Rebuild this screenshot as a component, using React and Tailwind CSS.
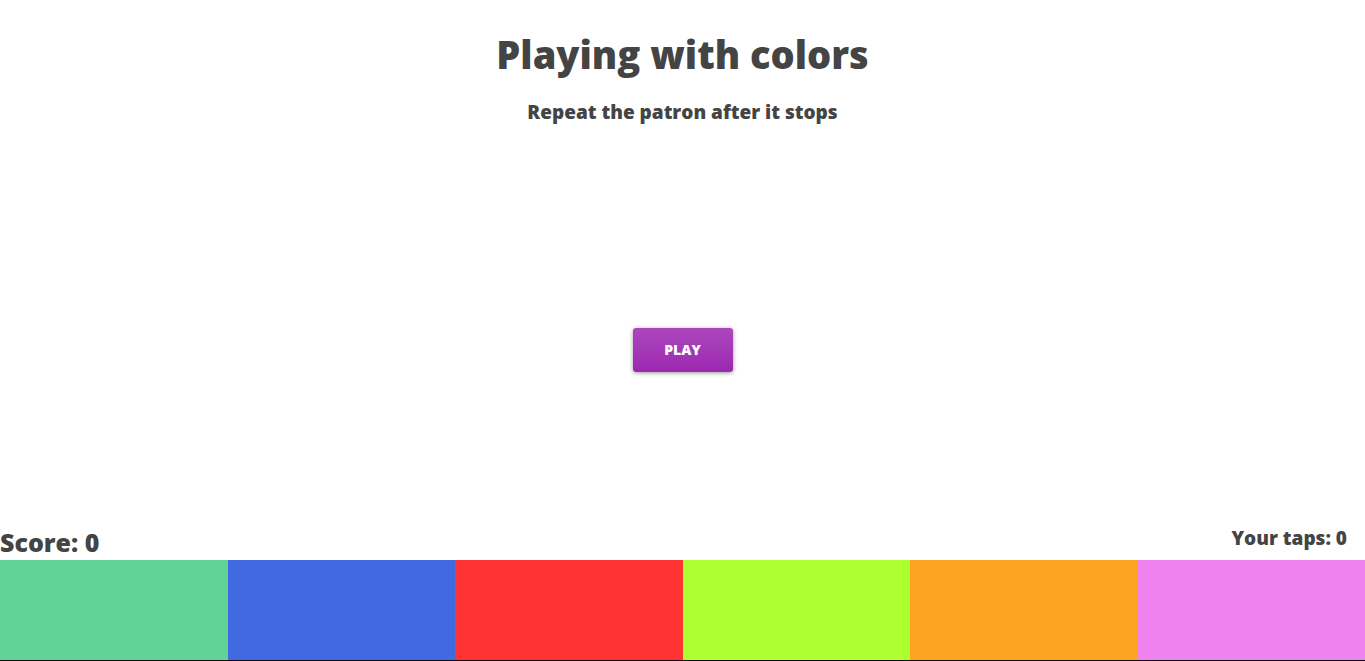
import { useState } from "react";

const tiles = [
  { name: "Green", color: "bg-[#61d394]" },
  { name: "Blue", color: "bg-[#4169e1]" },
  { name: "Red", color: "bg-[#ff3333]" },
  { name: "Lime", color: "bg-[#adff2f]" },
  { name: "Orange", color: "bg-[#ffa322]" },
  { name: "Violet", color: "bg-[#ee82ee]" },
];

export default function App() {
  const [taps, setTaps] = useState(0);

  return (
    <div className="flex min-h-screen flex-col border-b border-[#0b0b12] bg-white font-['Open_Sans',sans-serif] font-extrabold text-[#444444]">
      <header className="pt-6 text-center">
        <h1 className="text-[38px] leading-[60px]">Playing with colors</h1>
        <h2 className="mt-3 text-[19px] leading-8">Repeat the patron after it stops</h2>
      </header>
      <main className="flex grow items-center justify-center pt-13">
        <button
          type="button"
          onClick={() => setTaps(0)}
          className="h-11 w-[100px] rounded-[3px] bg-linear-to-b from-[#ab47bc] to-[#9c27b0] text-sm text-white shadow-[0_1px_4px_rgba(0,0,0,0.4)]"
        >
          PLAY
        </button>
      </main>
      <footer>
        <div className="flex items-start justify-between pr-[18px]">
          <p className="pt-1 text-[25px] leading-9">Score: 0</p>
          <p className="pt-0.5 text-[19px] leading-8">Your taps: {taps}</p>
        </div>
        <div className="grid grid-cols-6">
          {tiles.map((tile) => (
            <button
              key={tile.name}
              type="button"
              aria-label={tile.name}
              onClick={() => setTaps(taps + 1)}
              className={`h-[100px] ${tile.color}`}
            />
          ))}
        </div>
      </footer>
    </div>
  );
}
